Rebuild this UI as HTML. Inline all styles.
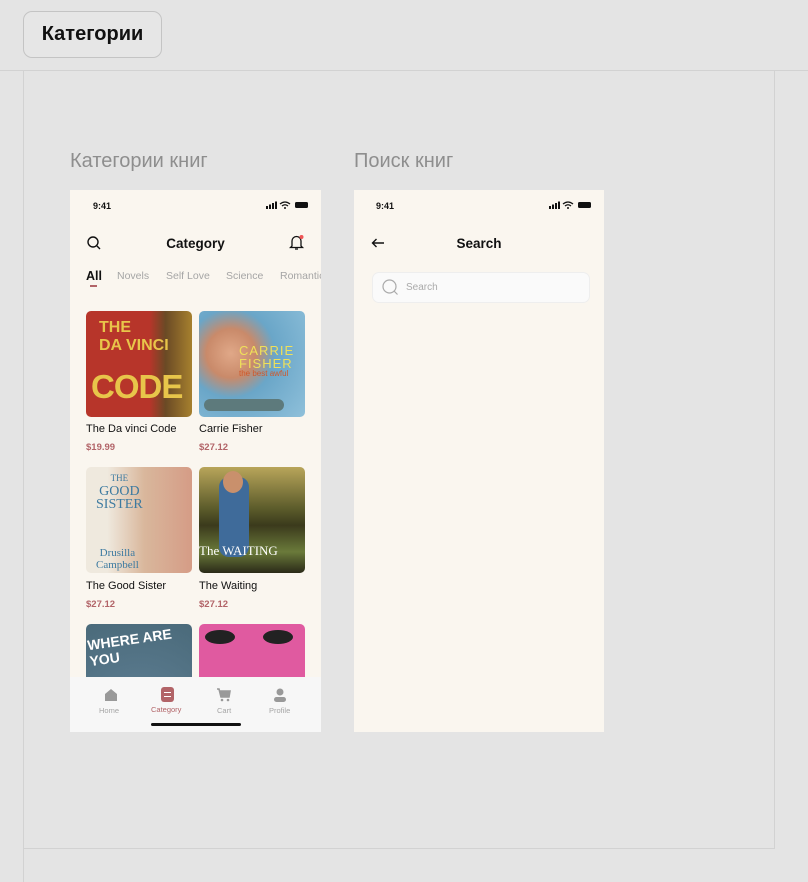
<!DOCTYPE html>
<html><head><meta charset="utf-8"><style>
*{box-sizing:border-box;margin:0;padding:0}
body{width:808px;height:882px;background:#e4e4e4;font-family:"Liberation Sans",sans-serif;position:relative;overflow:hidden}
.abs{position:absolute}
.btn{left:23px;top:11px;width:139px;height:47px;border:1px solid #c4c4c4;border-radius:9px;font-size:20px;font-weight:bold;color:#111;display:flex;align-items:center;justify-content:center;background:#e6e6e6}
.hl{height:1px;background:#d2d2d2}
.vl{width:1px;background:#d2d2d2}
.lbl{font-size:20px;color:#8e8e8e}
.phone{background:#faf6ef;overflow:hidden}
.st{font-size:9px;font-weight:bold;color:#111}
.cover{position:absolute;width:106px;height:106px;border-radius:5px;overflow:hidden}
.t{position:absolute;font-size:11px;color:#111}
.p{position:absolute;font-size:9.5px;font-weight:bold;color:#b26468}
.tab{position:absolute;font-size:10.5px;color:#a5a5a5}
</style></head><body>
<div class="abs btn">Категории</div>
<div class="abs hl" style="left:0;top:70px;width:808px"></div>
<div class="abs vl" style="left:23px;top:70px;height:812px"></div>
<div class="abs vl" style="left:774px;top:70px;height:779px"></div>
<div class="abs hl" style="left:23px;top:848px;width:752px"></div>
<div class="abs lbl" style="left:70px;top:150px">Категории книг</div>
<div class="abs lbl" style="left:354px;top:150px">Поиск книг</div>

<!-- phone 1 -->
<div class="abs phone" style="left:70px;top:190px;width:251px;height:542px">
 <div class="abs st" style="left:23px;top:11px">9:41</div>
 <svg class="abs" style="left:196px;top:11px" width="44" height="8"><rect x="0" y="5" width="2" height="3" fill="#111"/><rect x="3" y="3.5" width="2" height="4.5" fill="#111"/><rect x="6" y="2" width="2" height="6" fill="#111"/><rect x="9" y="0.5" width="2" height="7.5" fill="#111"/><path d="M14 3 Q19 -1 24 3 M16 5 Q19 2.5 22 5" stroke="#111" stroke-width="1.3" fill="none"/><circle cx="19" cy="7" r="1" fill="#111"/><rect x="29" y="1" width="13" height="6" rx="1.5" fill="#111"/></svg>
 <svg class="abs" style="left:17px;top:46px" width="14" height="14"><circle cx="6" cy="6" r="5" stroke="#111" stroke-width="1.4" fill="none"/><path d="M10 10L13 13" stroke="#111" stroke-width="1.4"/></svg>
 <div class="abs" style="left:0;width:251px;top:46px;text-align:center;font-size:13.5px;font-weight:bold;color:#111">Category</div>
 <svg class="abs" style="left:219px;top:44px" width="16" height="17"><path d="M3 12 V7 a4.5 4.5 0 0 1 9 0 V12 L13.5 13.5 H1.5 Z" stroke="#111" stroke-width="1.3" fill="none"/><path d="M6 15 h3" stroke="#111" stroke-width="1.3"/><circle cx="12.5" cy="3" r="2" fill="#e55"/></svg>
 <div class="tab" style="left:16px;top:79px;font-size:12.5px;font-weight:bold;color:#111">All</div>
 <div class="abs" style="left:20px;top:95px;width:7px;height:1.5px;background:#b26468"></div>
 <div class="tab" style="left:47px;top:80px">Novels</div>
 <div class="tab" style="left:96px;top:80px">Self Love</div>
 <div class="tab" style="left:156px;top:80px">Science</div>
 <div class="tab" style="left:210px;top:80px;white-space:nowrap">Romantic</div>

 <div class="cover" style="left:16px;top:121px;background:linear-gradient(90deg,#b7352a 60%,#6a4a25 75%,#a6802e)">
  <div style="position:absolute;left:13px;top:8px;color:#e8c54a;font-weight:bold;font-size:16px;line-height:18px">THE<br>DA VINCI</div>
  <div style="position:absolute;left:5px;top:57px;color:#e8c54a;font-weight:bold;font-size:33px;letter-spacing:-1px">CODE</div>
 </div>
 <div class="t" style="left:16px;top:233px">The Da vinci Code</div>
 <div class="p" style="left:16px;top:252px">$19.99</div>

 <div class="cover" style="left:129px;top:121px;background:radial-gradient(circle at 30% 40%,#e0a888 0,#c98a6a 25%,#6aa6c8 45%,#8fc0da)">
  <div style="position:absolute;left:40px;top:33px;color:#efe05a;font-size:13px;letter-spacing:1px;line-height:13px">CARRIE<br>FISHER</div>
  <div style="position:absolute;left:40px;top:58px;color:#d0582a;font-size:8px">the best awful</div>
  <div style="position:absolute;left:5px;top:88px;width:80px;height:12px;background:#5d7a7c;border-radius:6px"></div>
 </div>
 <div class="t" style="left:129px;top:233px">Carrie Fisher</div>
 <div class="p" style="left:129px;top:252px">$27.12</div>

 <div class="cover" style="left:16px;top:277px;background:linear-gradient(90deg,#efe9de 20%,#d9b79c 55%,#d59c86)">
  <div style="position:absolute;left:10px;top:4px;color:#3d7aa0;font-family:'Liberation Serif',serif;font-size:14px;line-height:13px;text-align:center"><span style="font-size:9px">THE</span><br>GOOD<br>SISTER</div>
  <div style="position:absolute;left:10px;top:80px;color:#3d7aa0;font-family:'Liberation Serif',serif;font-size:11px;line-height:12px;text-align:center">Drusilla<br>Campbell</div>
 </div>
 <div class="t" style="left:16px;top:390px">The Good Sister</div>
 <div class="p" style="left:16px;top:409px">$27.12</div>

 <div class="cover" style="left:129px;top:277px;background:linear-gradient(180deg,#b8a55a 0,#5a5a2a 40%,#3b3a1c 55%,#6a7a3a 80%,#2a2a18)">
  <div style="position:absolute;left:20px;top:10px;width:30px;height:80px;background:#3f6b9a;border-radius:10px"></div>
  <div style="position:absolute;left:24px;top:4px;width:20px;height:22px;background:#c9906c;border-radius:50%"></div>
  <div style="position:absolute;left:0;top:76px;color:#fff;font-family:'Liberation Serif',serif;font-size:13px">The WAITING</div>
 </div>
 <div class="t" style="left:129px;top:390px">The Waiting</div>
 <div class="p" style="left:129px;top:409px">$27.12</div>

 <div class="cover" style="left:16px;top:434px;background:radial-gradient(circle at 50% 95%,#e6c23a 0,#e6c23a 22%,#fff 24%,#5a7a8e 30%,#4a6a7a)">
  <div style="position:absolute;left:2px;top:6px;color:#fff;font-weight:bold;font-size:14px;transform:rotate(-8deg)">WHERE ARE YOU</div>
 </div>
 <div class="cover" style="left:129px;top:434px;background:linear-gradient(180deg,#e05aa0 0,#e05aa0 60%,#f2c230 60%)">
  <div style="position:absolute;left:6px;top:6px;width:30px;height:14px;background:#222;border-radius:50%"></div>
  <div style="position:absolute;left:64px;top:6px;width:30px;height:14px;background:#222;border-radius:50%"></div>
 </div>

 <div class="abs" style="left:0;top:487px;width:251px;height:55px;background:#f7f7f7"></div>
 <svg class="abs" style="left:34px;top:498px" width="14" height="13"><path d="M1 6 L7 1 L13 6 V13 H1Z" fill="#999"/></svg>
 <div class="abs" style="left:29px;top:516px;font-size:7.5px;color:#a5a5a5">Home</div>
 <div class="abs" style="left:91px;top:497px;width:13px;height:15px;background:#b26468;border-radius:3px"></div>
 <div class="abs" style="left:94px;top:502px;width:7px;height:1.3px;background:#fff"></div>
 <div class="abs" style="left:94px;top:506px;width:7px;height:1.3px;background:#fff"></div>
 <div class="abs" style="left:81px;top:515px;font-size:7.5px;color:#b26468">Category</div>
 <svg class="abs" style="left:146px;top:498px" width="15" height="14"><path d="M1 1 H3 L5 9 H13 L14 3 H4" stroke="#999" stroke-width="1.6" fill="#999"/><circle cx="6" cy="12" r="1.3" fill="#999"/><circle cx="12" cy="12" r="1.3" fill="#999"/></svg>
 <div class="abs" style="left:147px;top:516px;font-size:7.5px;color:#a5a5a5">Cart</div>
 <svg class="abs" style="left:204px;top:498px" width="12" height="14"><circle cx="6" cy="4" r="3.5" fill="#999"/><rect x="0" y="9" width="12" height="5" rx="2.5" fill="#999"/></svg>
 <div class="abs" style="left:199px;top:516px;font-size:7.5px;color:#a5a5a5">Profile</div>
 <div class="abs" style="left:81px;top:533px;width:90px;height:3px;background:#111;border-radius:2px"></div>
</div>

<!-- phone 2 -->
<div class="abs phone" style="left:354px;top:190px;width:250px;height:542px">
 <div class="abs st" style="left:22px;top:11px">9:41</div>
 <svg class="abs" style="left:195px;top:11px" width="44" height="8"><rect x="0" y="5" width="2" height="3" fill="#111"/><rect x="3" y="3.5" width="2" height="4.5" fill="#111"/><rect x="6" y="2" width="2" height="6" fill="#111"/><rect x="9" y="0.5" width="2" height="7.5" fill="#111"/><path d="M14 3 Q19 -1 24 3 M16 5 Q19 2.5 22 5" stroke="#111" stroke-width="1.3" fill="none"/><circle cx="19" cy="7" r="1" fill="#111"/><rect x="29" y="1" width="13" height="6" rx="1.5" fill="#111"/></svg>
 <svg class="abs" style="left:17px;top:48px" width="14" height="10"><path d="M13 5 H2 M5.5 1 L1.5 5 L5.5 9" stroke="#111" stroke-width="1.4" fill="none"/></svg>
 <div class="abs" style="left:0;width:250px;top:46px;text-align:center;font-size:13.5px;font-weight:bold;color:#111">Search</div>
 <div class="abs" style="left:18px;top:82px;width:218px;height:31px;background:#fafafa;border:1px solid #eee;border-radius:7px"></div>
 <svg class="abs" style="left:28px;top:89px" width="17" height="17"><circle cx="7.5" cy="7.5" r="6.5" stroke="#aaa" stroke-width="1.2" fill="none"/><path d="M12 12L15.5 15.5" stroke="#aaa" stroke-width="1.2"/></svg>
 <div class="abs" style="left:52px;top:92px;font-size:10px;color:#aaa">Search</div>
</div>
</body></html>
